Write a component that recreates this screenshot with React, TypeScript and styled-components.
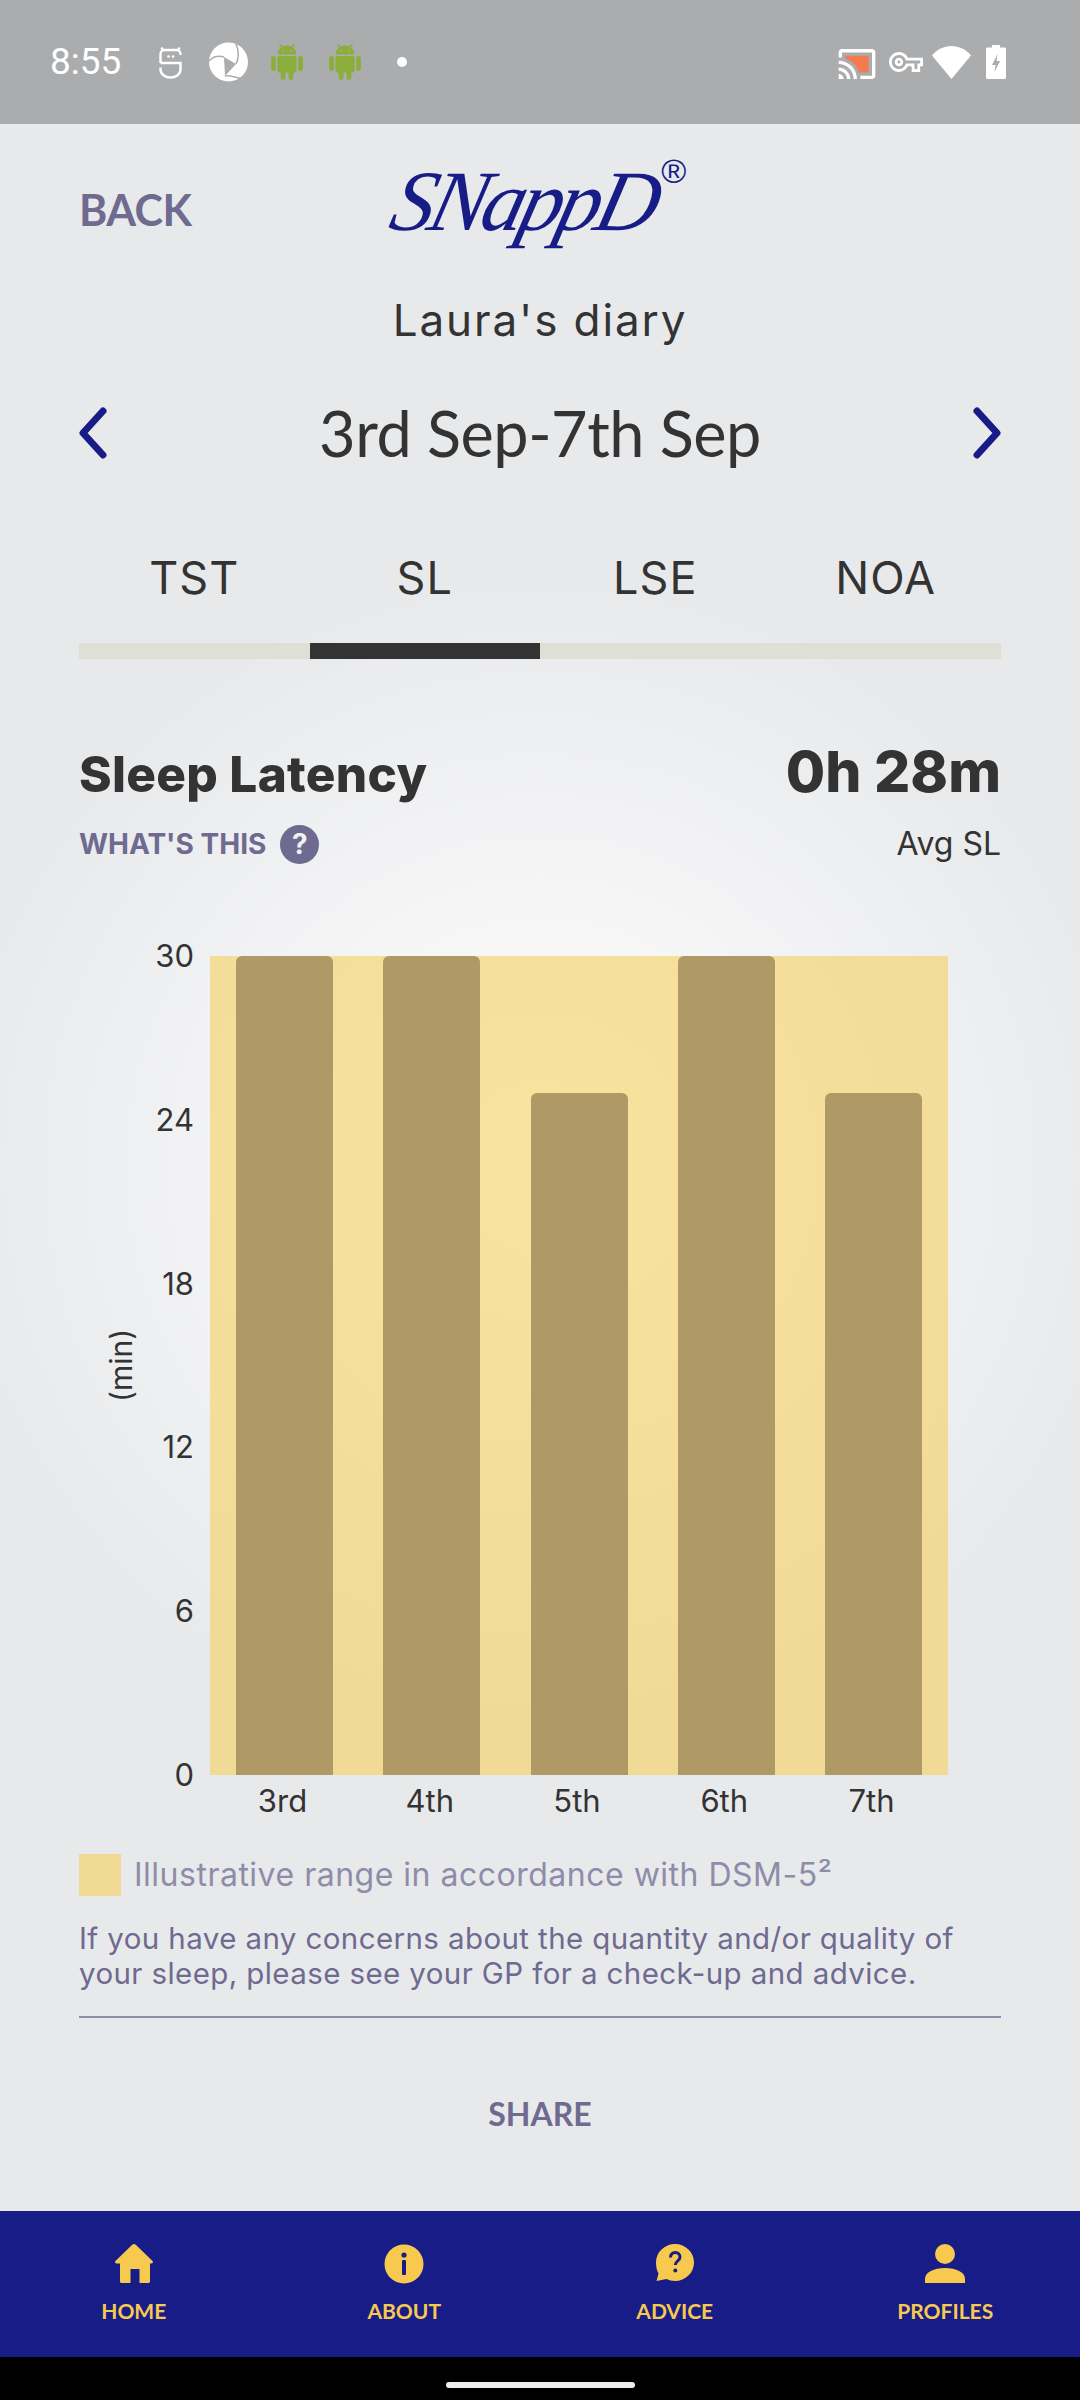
import React from "react";
import styled, { createGlobalStyle } from "styled-components";

const Global = createGlobalStyle`
  html, body { margin: 0; padding: 0; background: #000; }
  * { box-sizing: border-box; }
`;

const NAVY = "#171C87";
const YELLOW = "#F7C94F";
const INK = "#333333";
const MUTED = "#6E6A90";
const SOFT = "#8F8CA9";
const BODY = `Inter, "Open Sans", sans-serif`;
const HEAD = `Lato, "Open Sans", sans-serif`;

const Screen = styled.div`
  width: 1080px;
  height: 2400px;
  display: flex;
  flex-direction: column;
  overflow: hidden;
`;

const StatusBar = styled.div`
  height: 124px;
  flex: none;
  background: #abacae;
  display: flex;
  align-items: center;
  justify-content: space-between;
  padding: 0 74px 0 50px;
`;
const StatusGroup = styled.div<{ $gap: number }>`
  display: flex;
  align-items: center;
  gap: ${(p) => p.$gap}px;
`;
const Clock = styled.span`
  font: 400 37px/40px Roboto, sans-serif;
  color: #fff;
  margin-right: 18px;
`;
const Dot = styled.span`
  width: 10px;
  height: 10px;
  border-radius: 50%;
  background: #fff;
  margin-left: 13px;
`;

const Main = styled.main`
  flex: 1;
  padding: 0 79px;
  display: flex;
  flex-direction: column;
  background: radial-gradient(circle 600px at 540px 1043px, #ffffff 0%, #e8e9eb 100%);
`;
const TopRow = styled.div`
  height: 150px;
  margin-top: 11px;
  display: grid;
  grid-template-columns: 1fr auto 1fr;
  align-items: center;
`;
const BackLabel = styled.span`
  font: 700 43px/50px ${HEAD};
  color: ${MUTED};
  letter-spacing: -0.6px;
`;
const Logo = styled.div`
  display: flex;
  align-items: flex-start;
  color: ${NAVY};
  height: 104px;
`;
const LogoWord = styled.span`
  font: italic 400 86px/100px "Liberation Serif", serif;
  letter-spacing: -5px;
  transform: skewX(-14deg);
  margin-top: -7px;
`;
const LogoMark = styled.span`
  font: 400 34px/34px "Liberation Sans", sans-serif;
  margin: -4px 0 0 6px;
`;
const DiaryTitle = styled.h1`
  margin: 10px 0 0;
  height: 50px;
  text-align: center;
  font: 400 44px/50px ${BODY};
  letter-spacing: 1.9px;
  color: ${INK};
`;
const DateRow = styled.div`
  margin-top: 50px;
  height: 76px;
  display: flex;
  align-items: center;
  justify-content: space-between;
`;
const DateLabel = styled.span`
  font: 400 63px/76px ${HEAD};
  letter-spacing: -0.45px;
  color: ${INK};
`;
const Tabs = styled.div`
  margin-top: 82px;
  display: grid;
  grid-template-columns: repeat(4, 1fr);
`;
const Tab = styled.div`
  display: flex;
  flex-direction: column;
  align-items: center;
`;
const TabLabel = styled.span`
  font: 400 45px/50px ${BODY};
  letter-spacing: 1px;
  color: ${INK};
  height: 50px;
`;
const TabBar = styled.span<{ $active?: boolean }>`
  align-self: stretch;
  margin-top: 40px;
  height: 16px;
  background: ${(p) => (p.$active ? INK : "#dfdfd6")};
`;
const SummaryRow = styled.div`
  margin-top: 85px;
  height: 56px;
  display: flex;
  justify-content: space-between;
  align-items: flex-end;
`;
const Title = styled.h2`
  margin: 0 0 -2px;
  font: 800 49.5px/56px ${BODY};
  letter-spacing: 0.3px;
  color: ${INK};
`;
const Value = styled.span`
  font: 800 57px/56px ${BODY};
  color: ${INK};
  margin-top: -8px;
`;
const InfoRow = styled.div`
  margin-top: 24px;
  height: 40px;
  display: flex;
  justify-content: space-between;
  align-items: center;
`;
const WhatsThis = styled.span`
  display: flex;
  align-items: center;
  gap: 14px;
  font: 700 28px/40px ${BODY};
  color: ${MUTED};
`;
const HelpBadge = styled.span`
  width: 39px;
  height: 39px;
  border-radius: 50%;
  background: ${MUTED};
  color: #f1f1f3;
  display: flex;
  align-items: center;
  justify-content: center;
  font: 700 28px/39px ${BODY};
`;
const AvgLabel = styled.span`
  font: 400 32px/40px ${BODY};
  color: ${INK};
`;

const Chart = styled.div`
  margin-top: 92px;
  display: grid;
  grid-template-columns: 131px 738px;
  grid-template-rows: 819px 52px;
`;
const YAxis = styled.div`
  display: grid;
  grid-template-columns: 84px minmax(0, 1fr);
  margin-right: 16px;
`;
const AxisUnit = styled.span`
  writing-mode: vertical-rl;
  transform: rotate(180deg);
  font: 400 30px/42px ${BODY};
  color: ${INK};
  text-align: center;
  justify-self: center;
`;
const Ticks = styled.div`
  display: flex;
  flex-direction: column;
  justify-content: space-between;
  align-items: flex-end;
  margin: -18px 0;
`;
const Tick = styled.span`
  font: 400 31px/36px ${BODY};
  color: ${INK};
`;
const Plot = styled.div`
  background: rgba(246, 205, 85, 0.57);
  display: flex;
  justify-content: space-between;
  align-items: flex-end;
  padding: 0 26px;
`;
const Bar = styled.div`
  width: 97px;
  background: #af9964;
  border-radius: 6px 6px 0 0;
`;
const XAxis = styled.div`
  grid-column: 2;
  display: flex;
  justify-content: space-between;
  padding: 8px 28px 0 24px;
`;
const XLabel = styled.span`
  width: 97px;
  text-align: center;
  font: 400 31px/36px ${BODY};
  color: ${INK};
`;

const Legend = styled.div`
  margin-top: 27px;
  height: 42px;
  display: flex;
  align-items: center;
  gap: 13px;
`;
const Swatch = styled.span`
  width: 42px;
  height: 42px;
  background: #efd993;
`;
const LegendText = styled.span`
  font: 400 32px/42px ${BODY};
  letter-spacing: 0.5px;
  color: ${SOFT};
  white-space: nowrap;
`;
const Note = styled.p`
  margin: 25px 0 0;
  font: 400 29.5px/35px ${BODY};
  letter-spacing: 0.4px;
  color: ${MUTED};
`;
const Divider = styled.hr`
  margin: 25px 0 0;
  border: 0;
  height: 2px;
  background: ${SOFT};
`;
const Share = styled.div`
  margin-top: 76px;
  text-align: center;
  font: 700 32px/40px ${HEAD};
  color: ${MUTED};
`;

const Nav = styled.nav`
  height: 146px;
  flex: none;
  background: ${NAVY};
  display: grid;
  grid-template-columns: repeat(4, 270.5px);
  padding: 33px 0 0;
`;
const NavItem = styled.div`
  display: flex;
  flex-direction: column;
  align-items: center;
  gap: 14px;
  margin-left: -3px;
  color: ${YELLOW};
`;
const NavLabel = styled.span`
  font: 700 21px/26px ${HEAD};
`;
const GestureBar = styled.div`
  height: 43px;
  flex: none;
  background: #000;
  display: flex;
  justify-content: center;
  align-items: flex-end;
  padding-bottom: 12px;
`;
const GestureHandle = styled.span`
  width: 189px;
  height: 6px;
  border-radius: 3px;
  background: #eeeeee;
`;

const Android = () => (
  <svg width="38" height="36" viewBox="0 0 24 24" fill="#8BAE3A" preserveAspectRatio="none">
    <path d="M6 18c0 .55.45 1 1 1h1v3.500c0 .83.67 1.500 1.500 1.500s1.500-.67 1.500-1.500V19h2v3.500c0 .83.67 1.500 1.500 1.500s1.500-.67 1.500-1.500V19h1c.55 0 1-.45 1-1V8H6v10zM3.500 8C2.670 8 2 8.670 2 9.500v7c0 .83.67 1.500 1.500 1.500S5 17.330 5 16.500v-7C5 8.670 4.330 8 3.500 8zm17 0c-.83 0-1.500.67-1.500 1.500v7c0 .83.67 1.500 1.500 1.500s1.500-.67 1.500-1.500v-7c0-.83-.67-1.500-1.500-1.500zm-4.970-5.840l1.300-1.300c.2-.2.2-.51 0-.71-.2-.2-.51-.2-.71 0l-1.480 1.480C13.850 1.230 12.950 1 12 1c-.96 0-1.860.23-2.660.63L7.850.15c-.2-.2-.51-.2-.71 0-.2.2-.2.51 0 .71l1.310 1.310C6.970 3.260 6 5.010 6 7h12c0-1.990-.97-3.750-2.470-4.840zM10 5H9V4h1v1zm5 0h-1V4h1v1z" />
  </svg>
);

const RobotS = () => (
  <svg width="30" height="33" viewBox="0 0 30 33" fill="none" stroke="#fff" strokeWidth="2.400">
    <path d="M2.500 1.500l1.500 3M20.500 1.500l-1.500 3" />
    <path d="M1.500 17V8c0-2.500 2-4 4-4h12c2 0 4 1.500 4 4v1" />
    <path d="M1.500 17h20v6.500c0 4.500-4.500 8-10 8s-10-3.500-10-8V21.500" />
    <circle cx="9.500" cy="10.500" r="1.300" fill="#fff" stroke="none" />
    <circle cx="14" cy="10.500" r="1.300" fill="#fff" stroke="none" />
  </svg>
);

const Aperture = () => (
  <svg width="39" height="40" viewBox="0 0 39 40">
    <circle cx="19.500" cy="20" r="19.500" fill="#fff" />
    <path d="M15 15l12 7-11 12z" fill="#abacae" />
    <path d="M0 19C4 15 10 13.500 15 15" fill="none" stroke="#abacae" strokeWidth="1.500" />
    <path d="M27 22C30 16 30 9 27 2" fill="none" stroke="#abacae" strokeWidth="1.500" />
    <path d="M16 34C20 33 25 35 31 36" fill="none" stroke="#abacae" strokeWidth="1.500" />
  </svg>
);

const Cast = () => (
  <svg width="40" height="36" viewBox="0 0 24 21.500">
    <path fill="#F47B4F" d="M19 7H5v1.630c3.960 1.280 7.090 4.410 8.370 8.370H19V7z" />
    <path fill="#fff" d="M1 18v3h3c0-1.660-1.340-3-3-3zm0-4v2c2.760 0 5 2.240 5 5h2c0-3.870-3.130-7-7-7zM1 10v2c4.970 0 9 4.030 9 9h2c0-6.080-4.930-11-11-11zm20-7H3c-1.100 0-2 .9-2 2v3h2V5h18v14h-7v2h7c1.100 0 2-.9 2-2V5c0-1.100-.9-2-2-2z" />
  </svg>
);

const Key = () => (
  <svg width="34" height="34" viewBox="0 0 24 24" fill="#fff">
    <path d="M22 19h-6v-4h-2.680c-1.140 2.420-3.600 4-6.320 4-3.860 0-7-3.140-7-7s3.140-7 7-7c2.720 0 5.170 1.580 6.320 4H24v6h-2v4zm-4-2h2v-4h2v-2H11.940l-.23-.67C11.010 8.340 9.110 7 7 7c-2.760 0-5 2.240-5 5s2.240 5 5 5c2.110 0 4.010-1.340 4.710-3.330l.23-.67H18v4zM7 15c-1.650 0-3-1.350-3-3s1.350-3 3-3 3 1.350 3 3-1.350 3-3 3zm0-4c-.55 0-1 .45-1 1s.45 1 1 1 1-.45 1-1-.45-1-1-1z" />
  </svg>
);

const WifiGlyph = styled.svg`
  margin: 0 3px 0 -3px;
`;
const Wifi = () => (
  <WifiGlyph width="39" height="33" viewBox="0 0 39 33" fill="#fff">
    <path d="M19.500 33L0 9.500C5 3.500 12 0 19.500 0S34 3.500 39 9.500z" />
  </WifiGlyph>
);

const Battery = () => (
  <svg width="20" height="34" viewBox="0 0 20 34">
    <path fill="#fff" d="M6 0h8v2.500h4.500c.8 0 1.500.7 1.500 1.500v28.500c0 .8-.7 1.500-1.500 1.500h-17C.7 34 0 33.300 0 32.500V4c0-.8.7-1.500 1.500-1.500H6z" />
    <path fill="#abacae" d="M11.500 9L6 20h3.500l-1 7L14 16h-3.500z" />
  </svg>
);

const ChevronIcon = ({ flip }: { flip?: boolean }) => (
  <svg width="28" height="52" viewBox="0 0 28 52" fill="none">
    <path
      d={flip ? "M4 4l20 22L4 48" : "M24 4L4 26l20 22"}
      stroke={NAVY}
      strokeWidth="7"
      strokeLinecap="round"
      strokeLinejoin="round"
    />
  </svg>
);

const HomeIcon = () => (
  <svg width="38" height="40" viewBox="0 0 38 40" fill={YELLOW}>
    <path d="M17.500.6C18.300-.2 19.700-.2 20.500.6L37.500 17c.8.8.5 2.500-1 2.500H35v18c0 .8-.7 1.500-1.500 1.500h-9V25h-9v14h-9C5.700 39 5 38.300 5 37.500v-18H1.500C0 19.500-.3 17.800.5 17z" />
  </svg>
);
const InfoIcon = () => (
  <svg width="40" height="40" viewBox="0 0 40 40">
    <circle cx="20" cy="20" r="19.500" fill={YELLOW} />
    <circle cx="20" cy="11" r="2.600" fill={NAVY} />
    <rect x="18" y="16" width="4" height="15" rx="1" fill={NAVY} />
  </svg>
);
const AdviceIcon = () => (
  <svg width="38" height="40" viewBox="0 0 38 40">
    <path fill={YELLOW} d="M19 0c10.500 0 19 8.200 19 18.500S29.500 37 19 37c-3 0-6-.7-8.500-2L.5 37l2-7.500C.8 26.500 0 22.500 0 18.500 0 8.200 8.500 0 19 0z" />
    <path d="M14.500 13.500c0-3 2-5 4.800-5s4.700 2 4.700 4.500c0 3.800-4.700 3.800-4.700 8" fill="none" stroke={NAVY} strokeWidth="3" />
    <circle cx="19.300" cy="26.500" r="2" fill={NAVY} />
  </svg>
);
const PersonIcon = () => (
  <svg width="40" height="40" viewBox="0 0 40 40" fill={YELLOW}>
    <circle cx="20" cy="10" r="10" />
    <path d="M0 39v-4c0-7 9-11 20-11s20 4 20 11v4z" />
  </svg>
);

const ticks = [30, 24, 18, 12, 6, 0];
const bars = [
  { label: "3rd", value: 30 },
  { label: "4th", value: 30 },
  { label: "5th", value: 25 },
  { label: "6th", value: 30 },
  { label: "7th", value: 25 },
];
const tabs = ["TST", "SL", "LSE", "NOA"];
const navItems = [
  { label: "HOME", icon: <HomeIcon /> },
  { label: "ABOUT", icon: <InfoIcon /> },
  { label: "ADVICE", icon: <AdviceIcon /> },
  { label: "PROFILES", icon: <PersonIcon /> },
];

export default function App() {
  return (
    <Screen>
      <Global />
      <StatusBar>
        <StatusGroup $gap={20}>
          <Clock>8:55</Clock>
          <RobotS />
          <Aperture />
          <Android />
          <Android />
          <Dot />
        </StatusGroup>
        <StatusGroup $gap={12}>
          <Cast />
          <Key />
          <Wifi />
          <Battery />
        </StatusGroup>
      </StatusBar>
      <Main>
        <TopRow>
          <BackLabel>BACK</BackLabel>
          <Logo>
            <LogoWord>SNappD</LogoWord>
            <LogoMark>®</LogoMark>
          </Logo>
        </TopRow>
        <DiaryTitle>Laura's diary</DiaryTitle>
        <DateRow>
          <ChevronIcon />
          <DateLabel>3rd Sep-7th Sep</DateLabel>
          <ChevronIcon flip />
        </DateRow>
        <Tabs>
          {tabs.map((t) => (
            <Tab key={t}>
              <TabLabel>{t}</TabLabel>
              <TabBar $active={t === "SL"} />
            </Tab>
          ))}
        </Tabs>
        <SummaryRow>
          <Title>Sleep Latency</Title>
          <Value>0h 28m</Value>
        </SummaryRow>
        <InfoRow>
          <WhatsThis>
            WHAT'S THIS
            <HelpBadge>?</HelpBadge>
          </WhatsThis>
          <AvgLabel>Avg SL</AvgLabel>
        </InfoRow>
        <Chart>
          <YAxis>
            <AxisUnit>(min)</AxisUnit>
            <Ticks>
              {ticks.map((t) => (
                <Tick key={t}>{t}</Tick>
              ))}
            </Ticks>
          </YAxis>
          <Plot>
            {bars.map((b) => (
              <Bar key={b.label} style={{ height: `${(b.value / 30) * 100}%` }} />
            ))}
          </Plot>
          <XAxis>
            {bars.map((b) => (
              <XLabel key={b.label}>{b.label}</XLabel>
            ))}
          </XAxis>
        </Chart>
        <Legend>
          <Swatch />
          <LegendText>Illustrative range in accordance with DSM-5²</LegendText>
        </Legend>
        <Note>
          If you have any concerns about the quantity and/or quality of your sleep, please see your GP for a check-up
          and advice.
        </Note>
        <Divider />
        <Share>SHARE</Share>
      </Main>
      <Nav>
        {navItems.map((n) => (
          <NavItem key={n.label}>
            {n.icon}
            <NavLabel>{n.label}</NavLabel>
          </NavItem>
        ))}
      </Nav>
      <GestureBar>
        <GestureHandle />
      </GestureBar>
    </Screen>
  );
}
